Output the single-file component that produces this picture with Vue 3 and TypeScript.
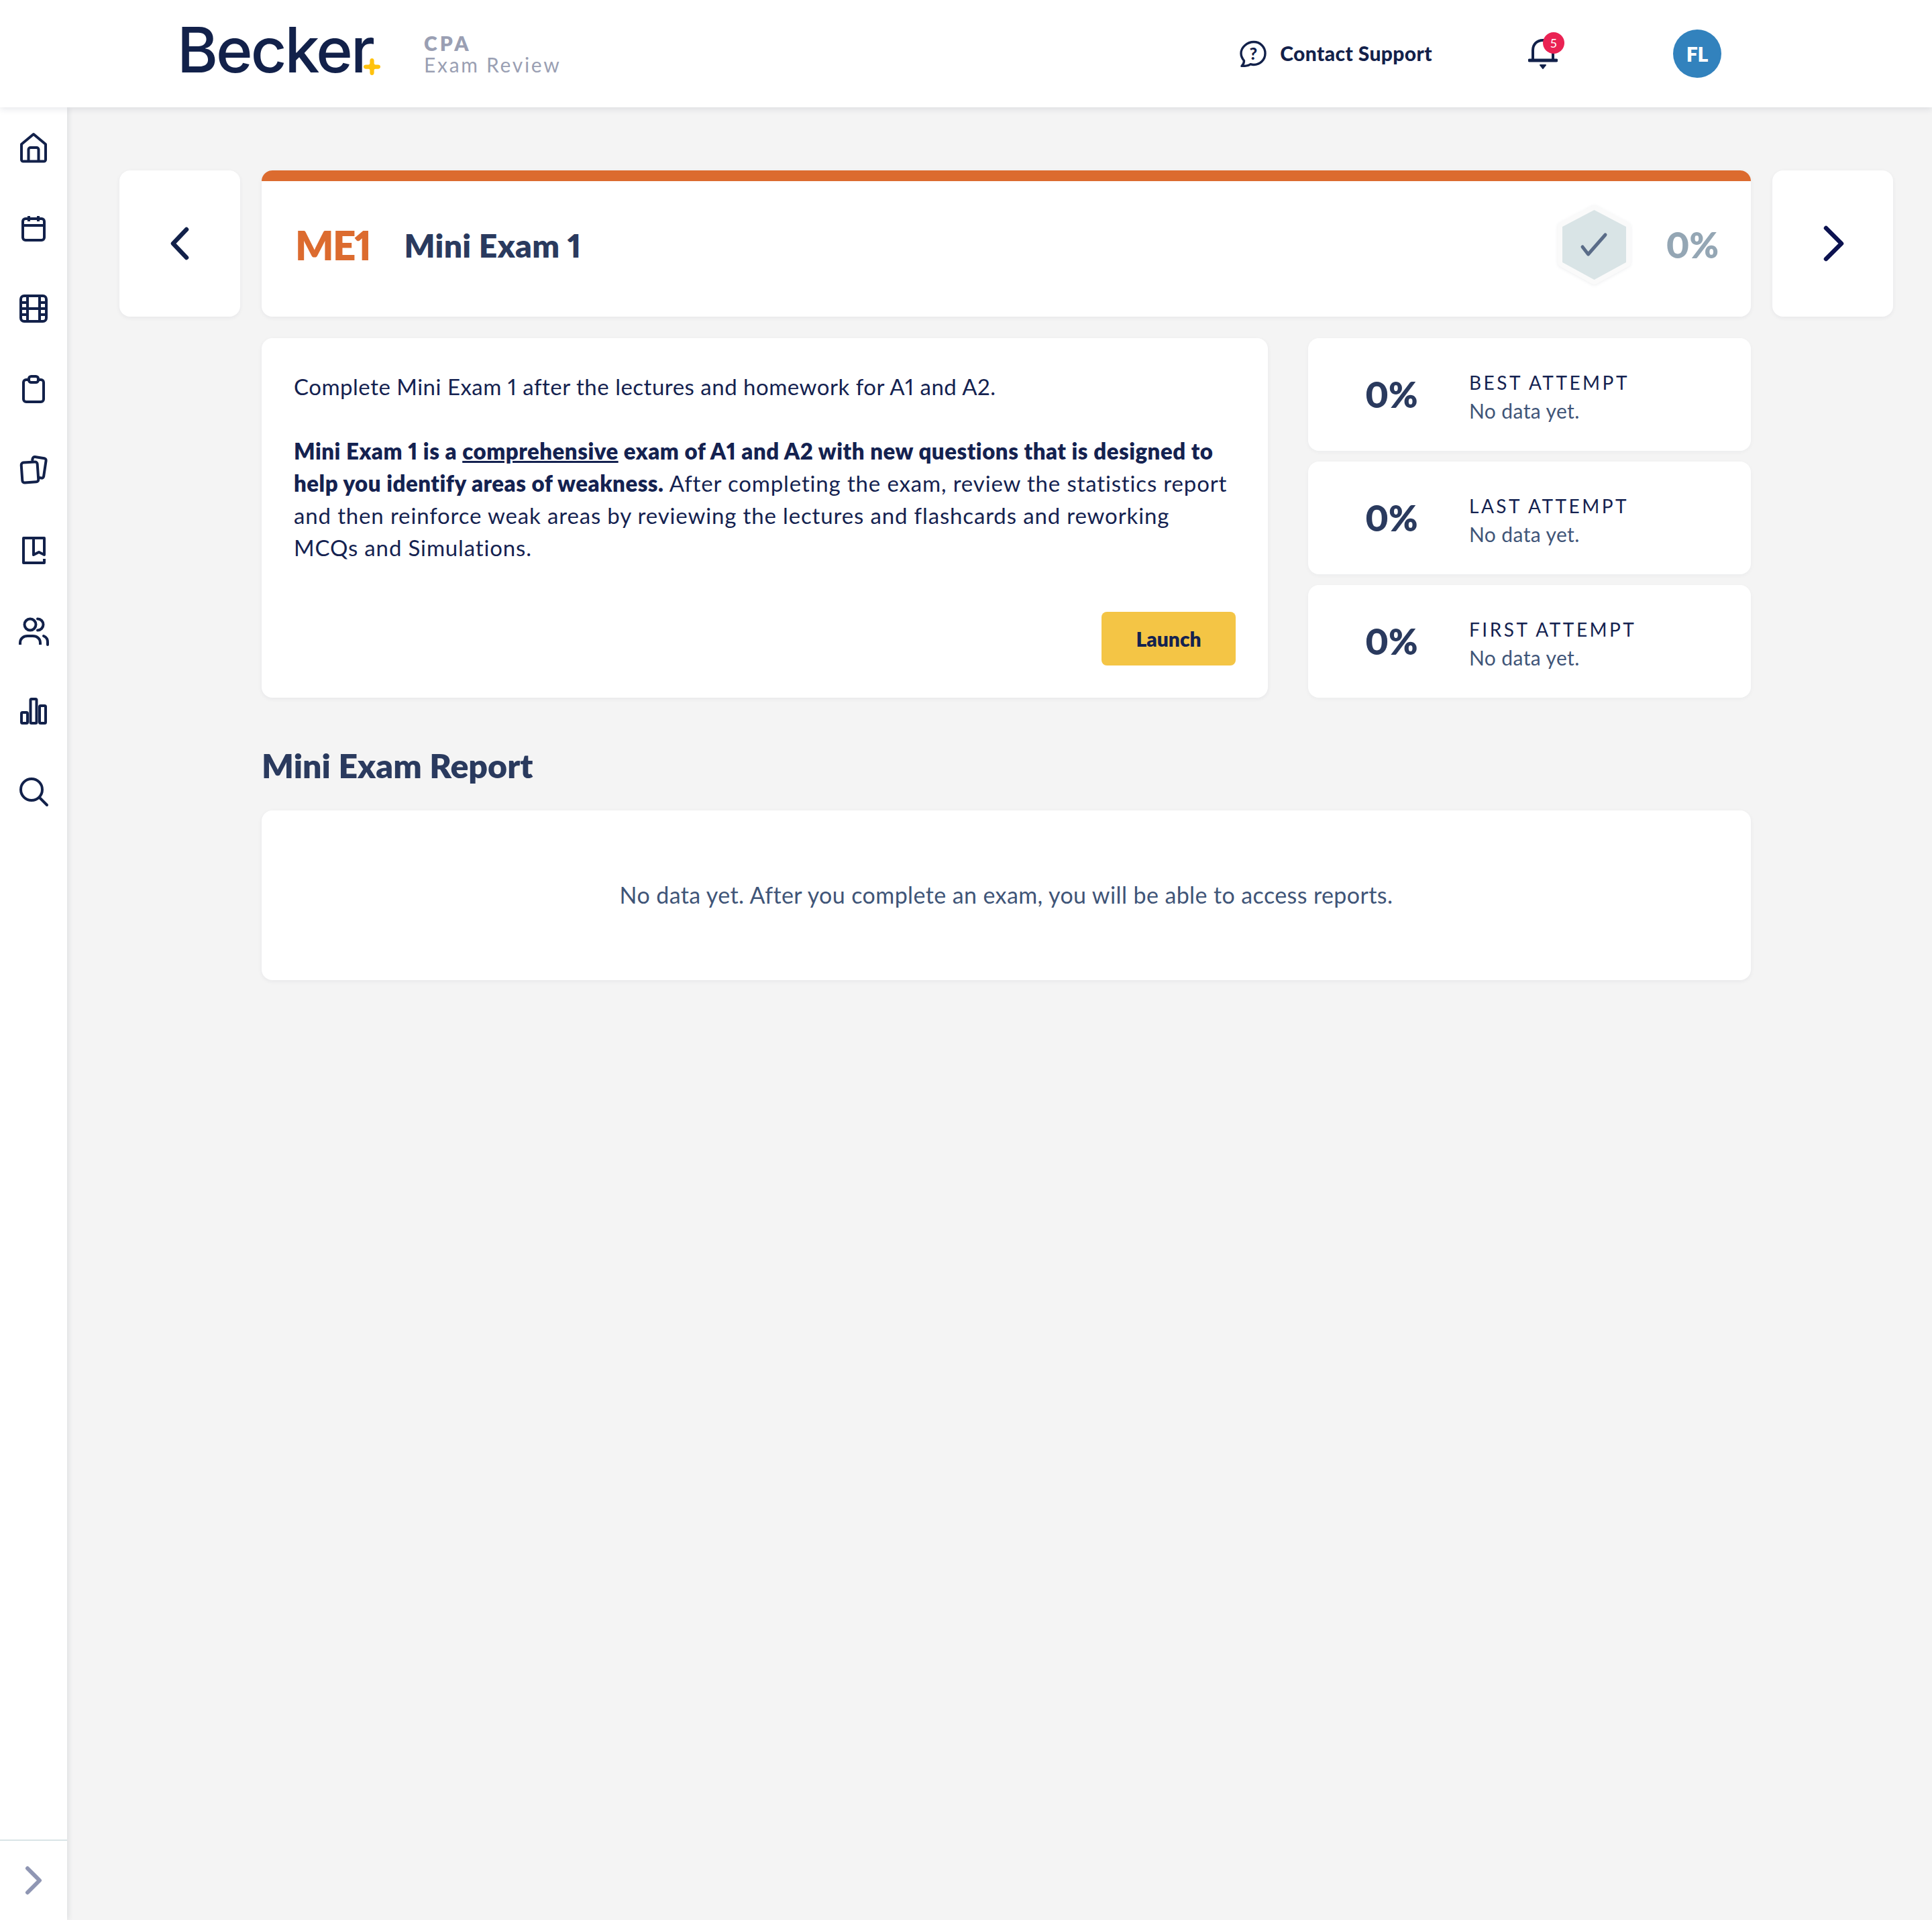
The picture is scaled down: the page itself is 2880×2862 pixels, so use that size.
<script setup lang="ts">
interface Attempt {
  label: string
  value: string
  note: string
}

const attempts: Attempt[] = [
  { label: 'BEST ATTEMPT', value: '0%', note: 'No data yet.' },
  { label: 'LAST ATTEMPT', value: '0%', note: 'No data yet.' },
  { label: 'FIRST ATTEMPT', value: '0%', note: 'No data yet.' },
]
</script>

<template>
  <div class="page">
    <header class="topbar">
      <div class="brand">
        <div class="logo">Becker<svg class="logo-star" viewBox="0 0 24 24"><path d="M12 0c2 0 3 1.200 3 3.500V7c0 1.200.8 2 2 2h3.500C22.800 9 24 10 24 12s-1.200 3-3.500 3H17c-1.200 0-2 .8-2 2v3.500c0 2.300-1 3.500-3 3.500s-3-1.200-3-3.500V17c0-1.200-.8-2-2-2H3.500C1.200 15 0 14 0 12s1.200-3 3.500-3H7c1.200 0 2-.8 2-2V3.500C9 1.200 10 0 12 0z" /></svg></div>
        <div class="product">
          <div class="product-top">CPA</div>
          <div class="product-sub">Exam Review</div>
        </div>
      </div>
      <div class="top-actions">
        <div class="support">
          <span class="support-icon">
            <svg width="40" height="40" viewBox="0 0 40 40" fill="none" stroke="#12214a" stroke-width="3.400" stroke-linejoin="round"><path d="M21 2.500c9.500 0 17 7.500 17 17s-7.500 17-17 17c-2 0-3.500-.3-5-.8-1.500 1.300-5 2.800-13 2.800 2.500-2.300 3.500-5 3.500-8-2.500-3-4.500-6.500-4.500-11 0-9.500 9.500-17 19-17z" /></svg>
            <span class="support-q">?</span>
          </span>
          <span class="support-text">Contact Support</span>
        </div>
        <div class="bell">
          <svg width="44" height="46" viewBox="0 0 44 46" fill="none" stroke="#12214a" stroke-width="4" stroke-linecap="round"><path d="M7 32V18C7 9 13 3 22 3s15 6 15 15v14" /><path d="M2 33h40" stroke-width="5" /><path d="M18 40h8l-4 5z" fill="#12214a" stroke-width="2" stroke-linejoin="round" /></svg>
          <span class="bell-badge">5</span>
        </div>
        <div class="avatar">FL</div>
      </div>
    </header>

    <div class="body-row">
      <aside class="sidebar">
        <nav class="side-nav">
          <a class="side-item">
            <svg class="side-icon" viewBox="0 0 48 48"><path d="M6 19 24 4l18 15v23a2.500 2.500 0 0 1-2.500 2.500h-31A2.500 2.500 0 0 1 6 42z" /><path d="M16.500 44V27a3 3 0 0 1 3-3h9a3 3 0 0 1 3 3v17" /></svg>
          </a>
          <a class="side-item">
            <svg class="side-icon" viewBox="0 0 48 48"><rect x="8" y="10" width="32" height="32" rx="4" /><path d="M8 20h32M17 6v8M31 6v8" /></svg>
          </a>
          <a class="side-item">
            <svg class="side-icon" viewBox="0 0 48 48"><rect x="5" y="5" width="38" height="38" rx="5" /><path d="M15 5v38M33 5v38M15 24h18M5 15h10M5 24h10M5 33h10M33 15h10M33 24h10M33 33h10" /></svg>
          </a>
          <a class="side-item">
            <svg class="side-icon" viewBox="0 0 48 48"><rect x="9" y="10" width="30" height="33" rx="4" /><rect x="17" y="5" width="14" height="9" rx="3.500" fill="#fff" /></svg>
          </a>
          <a class="side-item">
            <svg class="side-icon" viewBox="0 0 48 48"><rect x="6.500" y="13" width="24" height="30" rx="3.500" transform="rotate(-4 18 28)" /><path d="M22 11l.7-3.500a3 3 0 0 1 3.400-2.500l14 2.200a3 3 0 0 1 2.500 3.400l-3.500 23.500a3 3 0 0 1-3.400 2.500l-3.200-.5" /></svg>
          </a>
          <a class="side-item">
            <svg class="side-icon" viewBox="0 0 48 48"><path d="M40 37v6H9V6h31v25l-8-4-8 4V6" /></svg>
          </a>
          <a class="side-item">
            <svg class="side-icon" viewBox="0 0 48 48"><circle cx="19" cy="15" r="8.500" /><path d="M4 45v-3c0-6 5-10 11-10h8c6 0 11 4 11 10v3" /><path d="M30 6.500a8.500 8.500 0 0 1 0 17M39 32c3.500 1.500 6 5 6 9v4" stroke-linecap="round" /></svg>
          </a>
          <a class="side-item">
            <svg class="side-icon" viewBox="0 0 48 48"><rect x="6" y="26" width="9" height="16" rx="1.500" /><rect x="19.500" y="6" width="9" height="36" rx="1.500" /><rect x="33" y="16" width="9" height="26" rx="1.500" /></svg>
          </a>
          <a class="side-item">
            <svg class="side-icon" viewBox="0 0 48 48"><circle cx="21" cy="21" r="16" /><path d="M33 33l11 11" stroke-linecap="round" /></svg>
          </a>
        </nav>
        <div class="side-foot">
          <svg width="30" height="46" viewBox="0 0 30 46" fill="none" stroke="#8f96b3" stroke-width="6" stroke-linecap="round" stroke-linejoin="round"><path d="M6 5l18 18L6 41" /></svg>
        </div>
      </aside>

      <main class="content">
        <div class="lesson-grid">
          <button class="nav-card">
            <svg width="36" height="56" viewBox="0 0 36 56" fill="none" stroke="#12214a" stroke-width="6.500" stroke-linecap="round" stroke-linejoin="round"><path d="M28 7 8 28l20 21" /></svg>
          </button>

          <div class="center-col">
            <section class="title-card">
              <div class="title-left">
                <span class="code">ME1</span>
                <h1 class="title">Mini Exam 1</h1>
              </div>
              <div class="title-right">
                <svg class="hex" width="115" height="124" viewBox="0 0 115 124">
                  <path d="M57.500 10 105 35v53l-47.500 26L10 88V35z" fill="#d9e4e6" stroke="#fafafa" stroke-width="14" stroke-linejoin="round" paint-order="stroke" />
                  <path d="M40 65l8.500 11L74 47" fill="none" stroke="#5a6c88" stroke-width="5" stroke-linecap="round" stroke-linejoin="round" />
                </svg>
                <span class="progress">0%</span>
              </div>
            </section>

            <div class="detail-row">
              <section class="desc-card">
                <p class="desc"><span class="desc-lead">Complete Mini Exam 1 after the lectures and homework for A1 and A2.</span><br /><br /><strong>Mini Exam 1 is a <u>comprehensive</u> exam of A1 and A2 with new questions that is designed to help you identify areas of weakness.</strong> After completing the exam, review the statistics report and then reinforce weak areas by reviewing the lectures and flashcards and reworking MCQs and Simulations.</p>
                <div class="desc-foot">
                  <button class="launch">Launch</button>
                </div>
              </section>

              <div class="stats">
                <div v-for="a in attempts" :key="a.label" class="stat-card">
                  <div class="stat-value">{{ a.value }}</div>
                  <div class="stat-info">
                    <div class="stat-label">{{ a.label }}</div>
                    <div class="stat-note">{{ a.note }}</div>
                  </div>
                </div>
              </div>
            </div>

            <h2 class="report-title">Mini Exam Report</h2>
            <section class="report-card">No data yet. After you complete an exam, you will be able to access reports.</section>
          </div>

          <button class="nav-card">
            <svg width="36" height="56" viewBox="0 0 36 56" fill="none" stroke="#0c1250" stroke-width="6.500" stroke-linecap="round" stroke-linejoin="round"><path d="M8 5l23 23L8 51" /></svg>
          </button>
        </div>
      </main>
    </div>
  </div>
</template>

<style>
html, body {
  margin: 0;
  background: #f4f4f4;
}
</style>

<style scoped>
.page {
  display: flex;
  flex-direction: column;
  min-height: 2862px;
  font-family: Lato, "Open Sans", sans-serif;
  font-variant-numeric: proportional-nums;
  color: #142250;
}

.topbar {
  position: relative;
  z-index: 2;
  display: flex;
  align-items: center;
  justify-content: space-between;
  height: 160px;
  padding: 0 314px 0 264px;
  background: #fff;
  box-shadow: 0 2px 10px rgba(30, 40, 70, 0.12);
}

.brand {
  display: flex;
  align-items: center;
}

.logo {
  position: relative;
  width: 304px;
  margin-top: -12px;
  font-size: 93px;
  line-height: 1;
  font-weight: 500;
  letter-spacing: -3px;
  color: #12214a;
  font-family: Inter, sans-serif;
}

.logo-star {
  position: absolute;
  left: 278px;
  top: 59px;
  width: 25px;
  height: 25px;
  fill: #ffc20e;
}

.product {
  margin-top: -2px;
  margin-left: 64px;
  color: #9a9fb3;
  font-size: 30px;
}

.product-top {
  padding-top: 2px;
  font-weight: 800;
  letter-spacing: 4px;
  line-height: 32px;
}

.product-sub {
  letter-spacing: 2.700px;
  line-height: 32px;
  font-weight: 400;
}

.top-actions {
  display: flex;
  align-items: center;
}

.support {
  display: flex;
  align-items: center;
  gap: 20px;
  margin-right: 143px;
}

.support-icon {
  position: relative;
  display: flex;
  width: 40px;
  height: 40px;
}

.support-q {
  position: absolute;
  left: 0;
  right: 0;
  top: 4px;
  text-align: center;
  font-size: 25px;
  line-height: 30px;
  font-weight: 900;
  color: #12214a;
}

.support-text {
  margin-top: -2px;
  font-size: 30px;
  letter-spacing: 0.400px;
  font-weight: 900;
  color: #12214a;
}

.bell {
  position: relative;
  display: flex;
  margin-right: 172px;
}

.bell-badge {
  position: absolute;
  top: -9px;
  left: 22px;
  width: 32px;
  height: 32px;
  border-radius: 50%;
  background: #ea2253;
  color: #fff;
  font-size: 18px;
  line-height: 32px;
  text-align: center;
}

.avatar {
  width: 72px;
  height: 72px;
  border-radius: 50%;
  background: #3282bd;
  color: #fff;
  font-size: 30px;
  font-weight: 800;
  line-height: 72px;
  text-align: center;
}

.body-row {
  display: flex;
  flex: 1;
}

.sidebar {
  display: flex;
  flex-direction: column;
  justify-content: space-between;
  flex: 0 0 100px;
  background: #fff;
  box-shadow: 2px 0 8px rgba(30, 40, 70, 0.1);
}

.side-nav {
  display: flex;
  flex-direction: column;
}

.side-item {
  display: flex;
  align-items: center;
  justify-content: center;
  height: 120px;
}

.side-icon {
  width: 48px;
  height: 48px;
  fill: none;
  stroke: #12214a;
  stroke-width: 4;
  stroke-linejoin: round;
}

.side-foot {
  display: flex;
  align-items: center;
  justify-content: center;
  height: 118px;
  border-top: 2px solid #d9e4e6;
}

.content {
  flex: 1;
  padding: 94px 58px 0 78px;
}

.lesson-grid {
  display: grid;
  grid-template-columns: 180px 2220px 180px;
  column-gap: 32px;
  align-items: start;
}

.nav-card {
  display: flex;
  align-items: center;
  justify-content: center;
  height: 218px;
  padding: 0;
  border: 0;
  border-radius: 16px;
  background: #fff;
  box-shadow: 0 2px 6px rgba(30, 40, 70, 0.06);
}

.center-col {
  display: flex;
  flex-direction: column;
}

.title-card {
  display: flex;
  align-items: center;
  justify-content: space-between;
  box-sizing: border-box;
  height: 218px;
  padding: 16px 48px 12px 50px;
  border-radius: 16px;
  background: linear-gradient(#dc6b2f 16px, #fff 16px);
  box-shadow: 0 2px 6px rgba(30, 40, 70, 0.06);
}

.title-left {
  display: flex;
  align-items: center;
  gap: 50px;
}

.code {
  font-size: 60px;
  letter-spacing: -1.700px;
  font-weight: 800;
  color: #dc6b2f;
}

.title {
  margin: 0;
  font-size: 48px;
  letter-spacing: 0.300px;
  font-weight: 800;
  color: #2a3a5e;
}

.title-right {
  display: flex;
  align-items: center;
  gap: 50px;
}

.hex {
  filter: drop-shadow(0 1px 2px rgba(30, 40, 70, 0.08));
}

.progress {
  font-size: 52px;
  font-weight: 800;
  color: #94a6b4;
}

.detail-row {
  display: grid;
  grid-template-columns: 1500px 660px;
  column-gap: 60px;
  margin-top: 32px;
}

.desc-card {
  display: flex;
  flex-direction: column;
  justify-content: space-between;
  box-sizing: border-box;
  height: 536px;
  padding: 48px;
  border-radius: 16px;
  background: #fff;
  box-shadow: 0 2px 6px rgba(30, 40, 70, 0.06);
}

.desc {
  margin: 0;
  font-size: 33px;
  letter-spacing: 0.850px;
  line-height: 48px;
}

.desc-lead {
  letter-spacing: 0.500px;
}

.desc strong {
  font-weight: 800;
  letter-spacing: 0.500px;
}

.desc-foot {
  display: flex;
  justify-content: flex-end;
}

.launch {
  width: 200px;
  height: 80px;
  border: 0;
  border-radius: 8px;
  background: #f4c545;
  color: #142250;
  font-family: inherit;
  font-size: 30px;
  font-weight: 800;
}

.stats {
  display: flex;
  flex-direction: column;
  gap: 16px;
}

.stat-card {
  display: flex;
  align-items: center;
  height: 168px;
  border-radius: 16px;
  background: #fff;
  box-shadow: 0 2px 6px rgba(30, 40, 70, 0.04);
}

.stat-value {
  box-sizing: border-box;
  width: 240px;
  padding-left: 85px;
  font-size: 52px;
  font-weight: 800;
  color: #2a3a5e;
}

.stat-info {
  padding-top: 6px;
}

.stat-label {
  font-size: 28px;
  line-height: 40px;
  letter-spacing: 3.500px;
  color: #142250;
}

.stat-note {
  margin-top: 2px;
  font-size: 30px;
  letter-spacing: 0.400px;
  line-height: 40px;
  color: #3f5578;
}

.report-title {
  margin: 68px 0 34px;
  font-size: 50px;
  line-height: 66px;
  font-weight: 800;
  color: #2a3a5e;
}

.report-card {
  display: flex;
  align-items: center;
  justify-content: center;
  box-sizing: border-box;
  height: 253px;
  padding-bottom: 2px;
  border-radius: 16px;
  background: #fff;
  box-shadow: 0 2px 6px rgba(30, 40, 70, 0.06);
  font-size: 34px;
  letter-spacing: 0.400px;
  color: #3f5578;
}
</style>
